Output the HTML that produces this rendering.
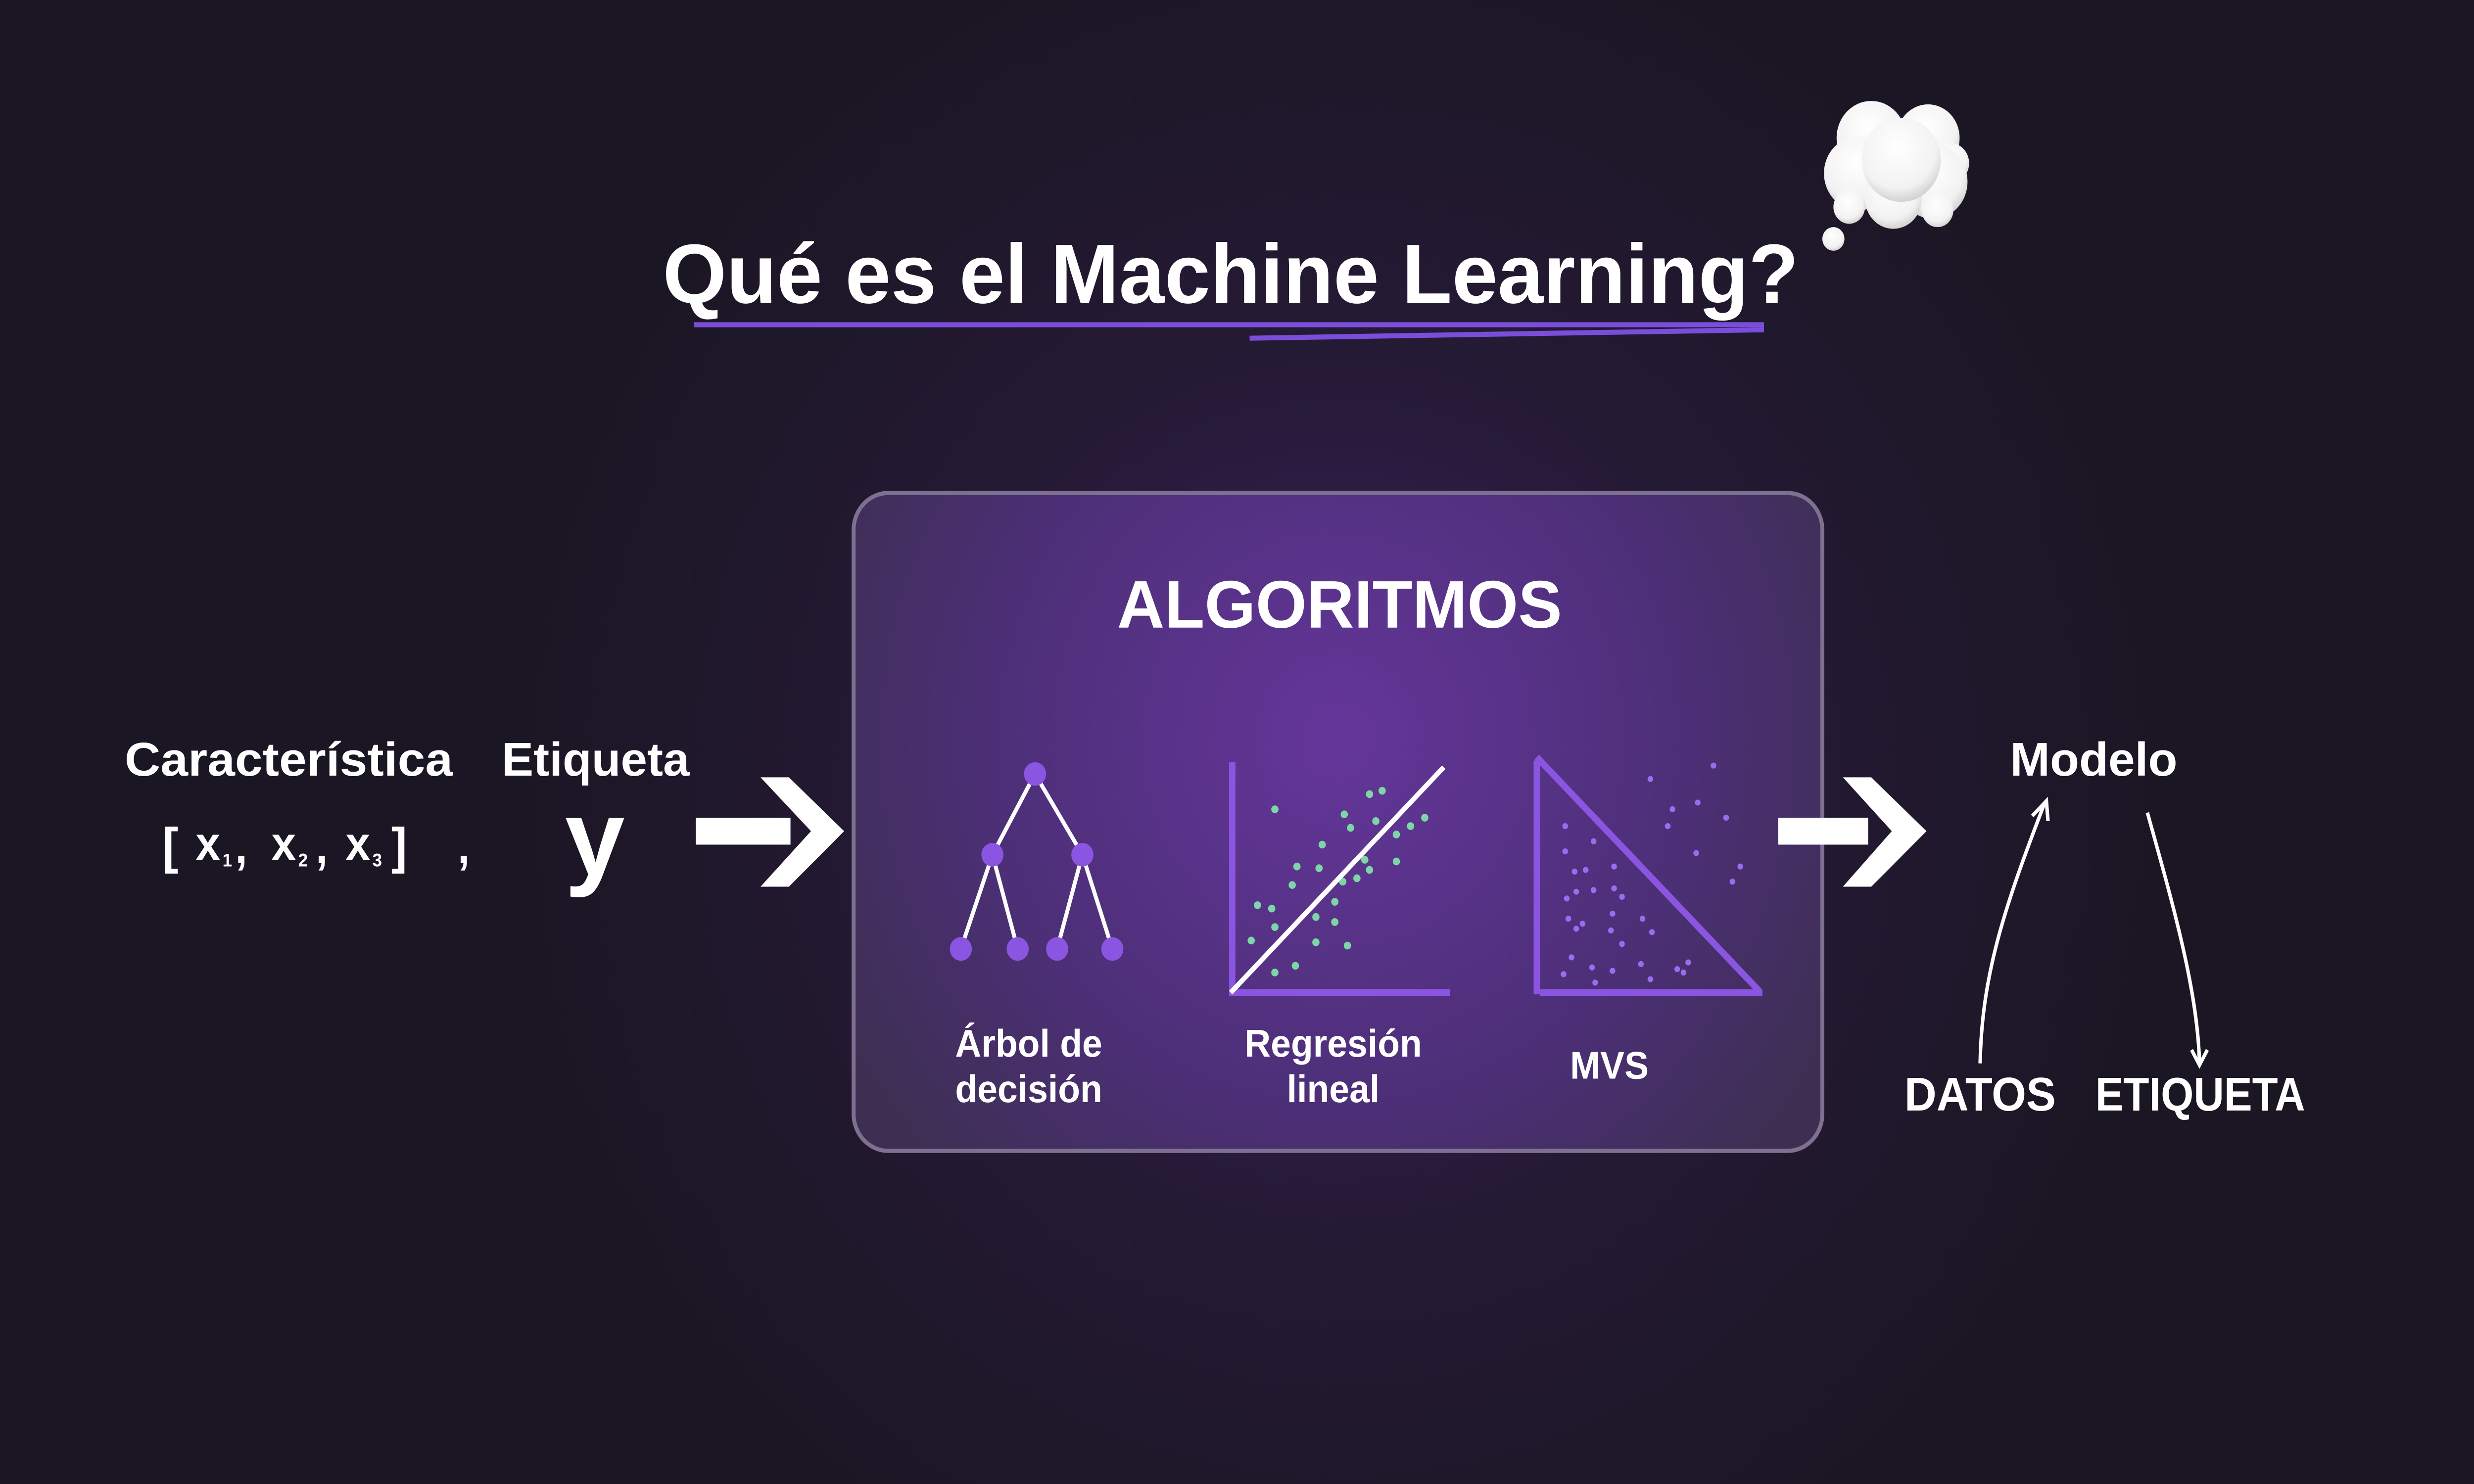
<!DOCTYPE html>
<html><head><meta charset="utf-8"><style>
html,body{margin:0;padding:0;background:#1b1624;width:100%;height:100%;overflow:hidden;}
svg{position:fixed;left:0;top:0;display:block;width:100vw;height:100vh;}
text{font-family:"Liberation Sans",sans-serif;font-weight:bold;fill:#fff;}
</style></head><body>
<svg viewBox="0 0 1568 882" preserveAspectRatio="none" xmlns="http://www.w3.org/2000/svg">
<defs>
<radialGradient id="bg" cx="848" cy="470" r="520" gradientUnits="userSpaceOnUse">
<stop offset="0" stop-color="#3a2060"/><stop offset="0.5" stop-color="#251a35"/><stop offset="1" stop-color="#1b1624"/>
</radialGradient>
<radialGradient id="box" cx="848" cy="440" r="360" gradientUnits="userSpaceOnUse">
<stop offset="0" stop-color="#64369a"/><stop offset="0.6" stop-color="#4d2f78"/><stop offset="1" stop-color="#3d2f52"/>
</radialGradient>
<radialGradient id="cl" cx="0.45" cy="0.35" r="0.7">
<stop offset="0" stop-color="#ffffff"/><stop offset="0.7" stop-color="#f2f2f2"/><stop offset="1" stop-color="#c8c8c8"/>
</radialGradient>
</defs>
<rect width="1568" height="882" fill="url(#bg)"/>
<g fill="url(#cl)">
<circle cx="1186" cy="82" r="22"/><circle cx="1222" cy="82" r="20"/><circle cx="1236" cy="97" r="12"/>
<circle cx="1178" cy="103" r="22"/><circle cx="1225" cy="108" r="22"/><circle cx="1200" cy="118" r="18"/>
<circle cx="1205" cy="95" r="25"/><circle cx="1172" cy="123" r="10"/><circle cx="1228" cy="125" r="10"/>
<circle cx="1162" cy="142" r="7"/>
</g>
<text x="780" y="180" font-size="50" text-anchor="middle" textLength="720" lengthAdjust="spacingAndGlyphs">Qué es el Machine Learning?</text>
<line x1="440" y1="193" x2="1118" y2="193" stroke="#7b4ddb" stroke-width="3"/>
<line x1="792" y1="201" x2="1118" y2="196" stroke="#7b4ddb" stroke-width="3"/>
<rect x="541" y="293" width="614" height="391" rx="22" fill="url(#box)" stroke="#7d7090" stroke-width="2.5"/>
<text x="849" y="373" font-size="40" text-anchor="middle" textLength="282" lengthAdjust="spacingAndGlyphs">ALGORITMOS</text>
<g stroke="#fff" stroke-width="2.5">
<line x1="656" y1="460" x2="629" y2="508"/><line x1="656" y1="460" x2="686" y2="508"/>
<line x1="629" y1="508" x2="609" y2="564"/><line x1="629" y1="508" x2="645" y2="564"/>
<line x1="686" y1="508" x2="670" y2="564"/><line x1="686" y1="508" x2="705" y2="564"/>
</g>
<g fill="#8a55e0">
<circle cx="656" cy="460" r="7"/><circle cx="629" cy="508" r="7"/><circle cx="686" cy="508" r="7"/>
<circle cx="609" cy="564" r="7"/><circle cx="645" cy="564" r="7"/><circle cx="670" cy="564" r="7"/><circle cx="705" cy="564" r="7"/>
</g>
<g fill="#8a55e0"><rect x="779" y="453" width="4" height="138"/><rect x="779" y="588" width="140" height="4"/></g>
<g fill="#7ed6a8">
<circle cx="808" cy="481" r="2.3"/><circle cx="868" cy="472" r="2.3"/><circle cx="876" cy="470" r="2.3"/><circle cx="852" cy="484" r="2.3"/>
<circle cx="856" cy="492" r="2.3"/><circle cx="872" cy="488" r="2.3"/><circle cx="885" cy="496" r="2.3"/><circle cx="894" cy="491" r="2.3"/>
<circle cx="903" cy="486" r="2.3"/><circle cx="838" cy="502" r="2.3"/><circle cx="822" cy="515" r="2.3"/><circle cx="836" cy="516" r="2.3"/>
<circle cx="865" cy="511" r="2.3"/><circle cx="868" cy="517" r="2.3"/><circle cx="885" cy="512" r="2.3"/><circle cx="819" cy="526" r="2.3"/>
<circle cx="851" cy="524" r="2.3"/><circle cx="860" cy="522" r="2.3"/><circle cx="797" cy="538" r="2.3"/><circle cx="806" cy="540" r="2.3"/>
<circle cx="846" cy="536" r="2.3"/><circle cx="834" cy="545" r="2.3"/><circle cx="808" cy="551" r="2.3"/><circle cx="793" cy="559" r="2.3"/>
<circle cx="834" cy="560" r="2.3"/><circle cx="854" cy="562" r="2.3"/><circle cx="821" cy="574" r="2.3"/><circle cx="808" cy="578" r="2.3"/><circle cx="846" cy="548" r="2.3"/>
</g>
<line x1="780" y1="590" x2="915" y2="456" stroke="#fff" stroke-width="3"/>
<g fill="#8a55e0"><rect x="972" y="452" width="4" height="139"/><rect x="976" y="588" width="141" height="4"/></g>
<line x1="974" y1="450" x2="1115" y2="589" stroke="#8a55e0" stroke-width="4"/>
<g fill="#9b6cf0">
<circle cx="1046" cy="463" r="1.8"/><circle cx="1086" cy="455" r="1.8"/><circle cx="1060" cy="481" r="1.8"/><circle cx="1076" cy="477" r="1.8"/>
<circle cx="1094" cy="486" r="1.8"/><circle cx="1057" cy="491" r="1.8"/><circle cx="1075" cy="507" r="1.8"/><circle cx="1103" cy="515" r="1.8"/>
<circle cx="1098" cy="524" r="1.8"/><circle cx="992" cy="491" r="1.8"/><circle cx="1010" cy="500" r="1.8"/><circle cx="992" cy="506" r="1.8"/>
<circle cx="998" cy="518" r="1.8"/><circle cx="1005" cy="517" r="1.8"/><circle cx="1023" cy="515" r="1.8"/><circle cx="999" cy="530" r="1.8"/>
<circle cx="1010" cy="529" r="1.8"/><circle cx="1023" cy="528" r="1.8"/><circle cx="993" cy="534" r="1.8"/><circle cx="1028" cy="533" r="1.8"/>
<circle cx="1022" cy="543" r="1.8"/><circle cx="994" cy="546" r="1.8"/><circle cx="1003" cy="549" r="1.8"/><circle cx="1041" cy="546" r="1.8"/>
<circle cx="999" cy="552" r="1.8"/><circle cx="1021" cy="553" r="1.8"/><circle cx="1047" cy="554" r="1.8"/><circle cx="1028" cy="561" r="1.8"/>
<circle cx="996" cy="569" r="1.8"/><circle cx="1009" cy="575" r="1.8"/><circle cx="1022" cy="577" r="1.8"/><circle cx="1040" cy="573" r="1.8"/>
<circle cx="1063" cy="576" r="1.8"/><circle cx="1070" cy="572" r="1.8"/><circle cx="1067" cy="578" r="1.8"/><circle cx="991" cy="579" r="1.8"/>
<circle cx="1011" cy="584" r="1.8"/><circle cx="1046" cy="582" r="1.8"/>
</g>
<g font-size="23" text-anchor="middle">
<text x="652" y="628">Árbol de</text><text x="652" y="655">decisión</text>
<text x="845" y="628">Regresión</text><text x="845" y="655">lineal</text>
<text x="1020" y="641">MVS</text>
</g>
<text x="79" y="461" font-size="28" textLength="208" lengthAdjust="spacingAndGlyphs">Característica</text>
<text x="318" y="461" font-size="28" textLength="119" lengthAdjust="spacingAndGlyphs">Etiqueta</text>
<text x="103" y="513" font-size="30">[</text>
<text x="124" y="511" font-size="28">x</text><text x="141" y="515" font-size="11">1</text><text x="149" y="513" font-size="28">,</text>
<text x="172" y="511" font-size="28">x</text><text x="189" y="515" font-size="11">2</text><text x="200" y="513" font-size="28">,</text>
<text x="219" y="511" font-size="28">x</text><text x="236" y="515" font-size="11">3</text>
<text x="248" y="513" font-size="30">]</text>
<text x="290" y="513" font-size="28">,</text>
<text x="358" y="520" font-size="64" textLength="38" lengthAdjust="spacingAndGlyphs">y</text>
<g fill="#fff">
<rect x="441" y="486" width="60" height="16"/>
<polygon points="482,462 500,462 535,494 500,527 482,527 514,494"/>
<rect x="1127" y="486" width="57" height="16"/>
<polygon points="1168,462 1186,462 1221,494 1186,527 1168,527 1199,494"/>
</g>
<text x="1327" y="461" font-size="28" text-anchor="middle" textLength="106" lengthAdjust="spacingAndGlyphs">Modelo</text>
<text x="1207" y="660" font-size="28" textLength="96" lengthAdjust="spacingAndGlyphs">DATOS</text>
<text x="1328" y="660" font-size="28" textLength="133" lengthAdjust="spacingAndGlyphs">ETIQUETA</text>
<g stroke="#fff" stroke-width="2.2" fill="none">
<path d="M1255,632 C1256,580 1270,540 1296,477"/>
<path d="M1288,485 L1297,476 L1298,488"/>
<path d="M1361,483 C1378,540 1393,590 1394,632"/>
<path d="M1389,624 L1394,633 L1399,624"/>
</g>
</svg>
</body></html>
